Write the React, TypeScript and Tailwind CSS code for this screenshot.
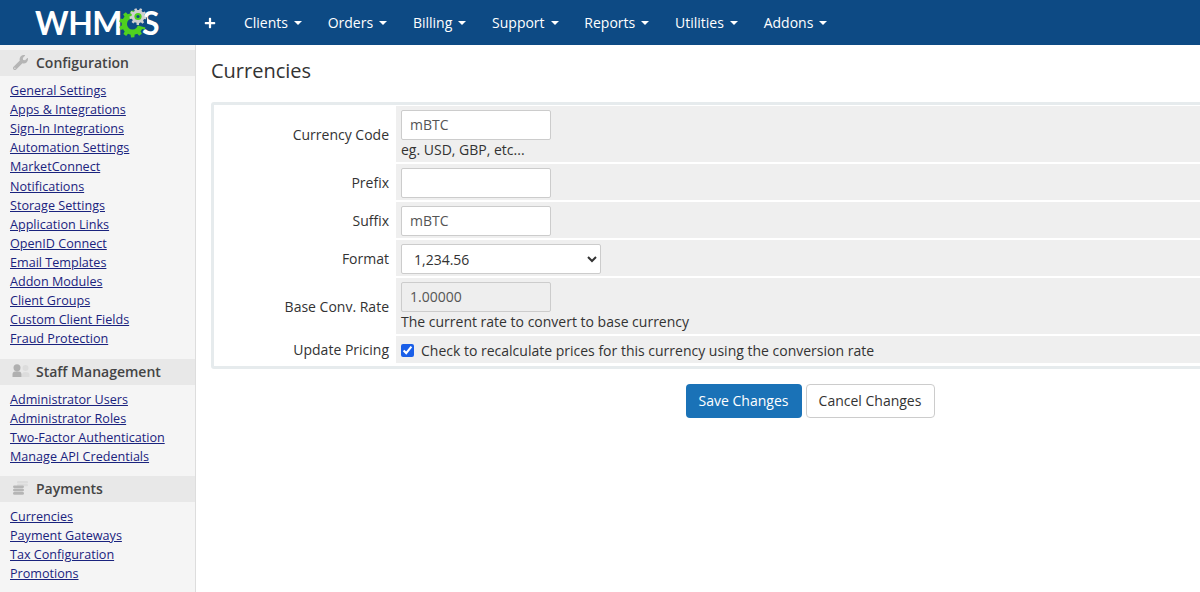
import { FaWrench, FaPlus } from "react-icons/fa";

const font = "font-['Open_Sans',sans-serif]";

function gearPath(cx: number, cy: number, ro: number, ri: number, teeth: number, start = 0) {
  const pts: string[] = [];
  const step = (Math.PI * 2) / teeth;
  for (let i = 0; i < teeth; i++) {
    const a = start + i * step;
    const list: [number, number][] = [
      [ri, a - step * 0.5],
      [ri, a - step * 0.3],
      [ro, a - step * 0.2],
      [ro, a + step * 0.2],
      [ri, a + step * 0.3],
    ];
    for (const [r, t] of list) {
      pts.push(`${(cx + r * Math.cos(t)).toFixed(2)} ${(cy + r * Math.sin(t)).toFixed(2)}`);
    }
  }
  return `M${pts.join("L")}Z`;
}

function Logo() {
  return (
    <div className="flex items-center w-[195px] pl-[35px] shrink-0 relative h-[45px]">
      <span className="font-['Lato',sans-serif] font-bold text-white text-[32px] leading-none tracking-[-0.5px] mt-[1px]">WHM</span>
      <span className="absolute left-[142px] top-[7px] font-['Lato',sans-serif] font-bold text-white text-[32px] leading-[32px]">S</span>
      <svg width="32" height="32" viewBox="0 0 32 32" className="absolute left-[119px] top-[7px]">
        <path d={gearPath(13.5, 17, 13.5, 10.8, 10, 0.3)} fill="#4fd11f" />
        <circle cx="13.5" cy="17" r="5.5" fill="#0d4a84" />
        <path d="M13.5 17L28 10L28 21Z" fill="#0d4a84" />
        <path d={gearPath(19, 9.5, 8.5, 6.5, 9, 0.2)} fill="#d0d0d0" />
        <circle cx="19" cy="9.5" r="3.6" fill="#4fd11f" />
        <circle cx="19" cy="9.5" r="1.6" fill="#0d4a84" />
      </svg>
    </div>
  );
}

const navItems = ["Clients", "Orders", "Billing", "Support", "Reports", "Utilities", "Addons"];

function Header() {
  return (
    <header className="h-[45px] bg-[#0d4a84] flex items-center shrink-0">
      <Logo />
      <FaPlus className="text-white ml-[9px] w-[12px] h-[12px] shrink-0" />
      <nav className="flex items-center ml-[15px]">
        {navItems.map((n) => (
          <a key={n} className="flex items-center px-[12.9px] text-white text-[14px] leading-[20px]">
            {n}
            <span className="ml-[6px] w-0 h-0 border-x-[4px] border-x-transparent border-t-[4px] border-t-white" />
          </a>
        ))}
      </nav>
    </header>
  );
}

function StaffIcon() {
  return (
    <svg width="18" height="14" viewBox="0 0 18 14" className="-ml-[1px]">
      <circle cx="13.5" cy="4" r="3" fill="#dcdcdc" />
      <path d="M10 13V10.5C10 8.8 11.5 8 13.5 8S17.5 8.8 17.5 10.5V13Z" fill="#dcdcdc" />
      <circle cx="5" cy="3.7" r="3.5" fill="#b0b0b0" />
      <path d="M0.5 13V10C0.5 8 2.5 7.3 5 7.3S9.5 8 9.5 10V13Z" fill="#b0b0b0" />
    </svg>
  );
}

function CoinsIcon() {
  return (
    <svg width="15" height="14" viewBox="0 0 15 14">
      <rect x="4" y="0" width="11" height="2.6" rx="1.3" fill="#dcdcdc" />
      <rect x="4" y="3.1" width="11" height="2.2" rx="1.1" fill="#dcdcdc" />
      <rect x="0" y="4.4" width="11" height="2.8" rx="1.4" fill="#b5b5b5" />
      <rect x="0" y="7.7" width="11" height="2.6" rx="1.3" fill="#b5b5b5" />
      <rect x="0" y="10.8" width="11" height="3" rx="1.5" fill="#b5b5b5" />
    </svg>
  );
}

const sections = [
  {
    title: "Configuration",
    icon: <FaWrench className="w-[15px] h-[15px]" />,
    gap: "mb-[10.5px]",
    links: [
      "General Settings",
      "Apps & Integrations",
      "Sign-In Integrations",
      "Automation Settings",
      "MarketConnect",
      "Notifications",
      "Storage Settings",
      "Application Links",
      "OpenID Connect",
      "Email Templates",
      "Addon Modules",
      "Client Groups",
      "Custom Client Fields",
      "Fraud Protection",
    ],
  },
  {
    title: "Staff Management",
    icon: <StaffIcon />,
    gap: "mb-[9.6px]",
    links: ["Administrator Users", "Administrator Roles", "Two-Factor Authentication", "Manage API Credentials"],
  },
  {
    title: "Payments",
    icon: <CoinsIcon />,
    gap: "mb-[10px]",
    links: ["Currencies", "Payment Gateways", "Tax Configuration", "Promotions"],
  },
];

function Sidebar() {
  return (
    <aside className="w-[196px] shrink-0 bg-[#f5f5f5] border-r border-[#dddddd] pt-[5px] h-[547px] overflow-hidden">
      {sections.map((s) => (
        <section key={s.title} className={s.gap}>
          <h3 className="h-[26px] pb-[1px] bg-[#e8e8e8] flex items-center text-[14px] font-semibold text-[#444444]">
            <span className="w-[36px] pl-[13px] shrink-0 text-[#b5b5b5] flex items-center">{s.icon}</span>
            {s.title}
          </h3>
          <ul className="pt-[5.1px] pl-[10px]">
            {s.links.map((l) => (
              <li key={l} className="text-[12.6px] leading-[19.1px]">
                <a className="text-[#1a237e] underline">{l}</a>
              </li>
            ))}
          </ul>
        </section>
      ))}
    </aside>
  );
}

function Row({ label, h, children }: { label: string; h: string; children: React.ReactNode }) {
  return (
    <div className={`flex ${h}`}>
      <div className="w-[182px] shrink-0 flex items-center justify-end pr-[7px] text-[14px] text-[#333333]">{label}</div>
      <div className="flex-1 bg-[#efefef] pl-[5px] pt-[3px] text-[14px] text-[#333333]">{children}</div>
    </div>
  );
}

const inputCls =
  "block w-[150px] h-[30px] mt-[1px] bg-white border border-[#cccccc] rounded-[2px] pl-[8px] pr-[8px] pb-[2px] text-[14px] text-[#555555] outline-none";

function Main() {
  return (
    <main className="flex-1 min-w-0 overflow-hidden pl-[15px]">
      <h1 className="text-[20px] leading-[28px] text-[#333333] mt-[12px] mb-[17px]">Currencies</h1>
      <div className="w-[1198px] border-[3px] border-[#e6ebed] rounded-[3px] pt-[1px] flex flex-col gap-[2px] pb-[3px]">
        <Row label="Currency Code" h="h-[56px]">
          <input className={inputCls} defaultValue="mBTC" />
          <div className="leading-[20px]">eg. USD, GBP, etc...</div>
        </Row>
        <Row label="Prefix" h="h-[36px]">
          <input className={inputCls} />
        </Row>
        <Row label="Suffix" h="h-[36px]">
          <input className={inputCls} defaultValue="mBTC" />
        </Row>
        <Row label="Format" h="h-[36px]">
          <select className="block w-[200px] h-[30px] mt-[1px] bg-white border border-[#cccccc] rounded-[2px] pl-[8px] text-[14px] text-[#333333] outline-none" defaultValue="1,234.56">
            <option>1,234.56</option>
          </select>
        </Row>
        <Row label="Base Conv. Rate" h="h-[56px]">
          <input className={`${inputCls} !bg-[#eeeeee]`} defaultValue="1.00000" disabled />
          <div className="leading-[20px]">The current rate to convert to base currency</div>
        </Row>
        <Row label="Update Pricing" h="h-[27px]">
          <label className="flex items-center h-[23px]">
            <input type="checkbox" defaultChecked className="w-[13px] h-[13px] accent-[#1a5fe8] mr-[7px]" />
            Check to recalculate prices for this currency using the conversion rate
          </label>
        </Row>
      </div>
      <div className="w-[1198px] flex justify-center gap-[4px] mt-[15px]">
        <button className="h-[34px] w-[116px] pb-[2px] rounded-[4px] bg-[#1a72b7] text-white text-[14px]">Save Changes</button>
        <button className="h-[34px] w-[129px] pb-[2px] rounded-[4px] bg-white border border-[#cccccc] text-[#333333] text-[14px]">Cancel Changes</button>
      </div>
    </main>
  );
}

export default function App() {
  return (
    <div className={`w-[1200px] h-[592px] overflow-hidden bg-white flex flex-col ${font}`}>
      <Header />
      <div className="flex flex-1 min-h-0">
        <Sidebar />
        <Main />
      </div>
    </div>
  );
}
